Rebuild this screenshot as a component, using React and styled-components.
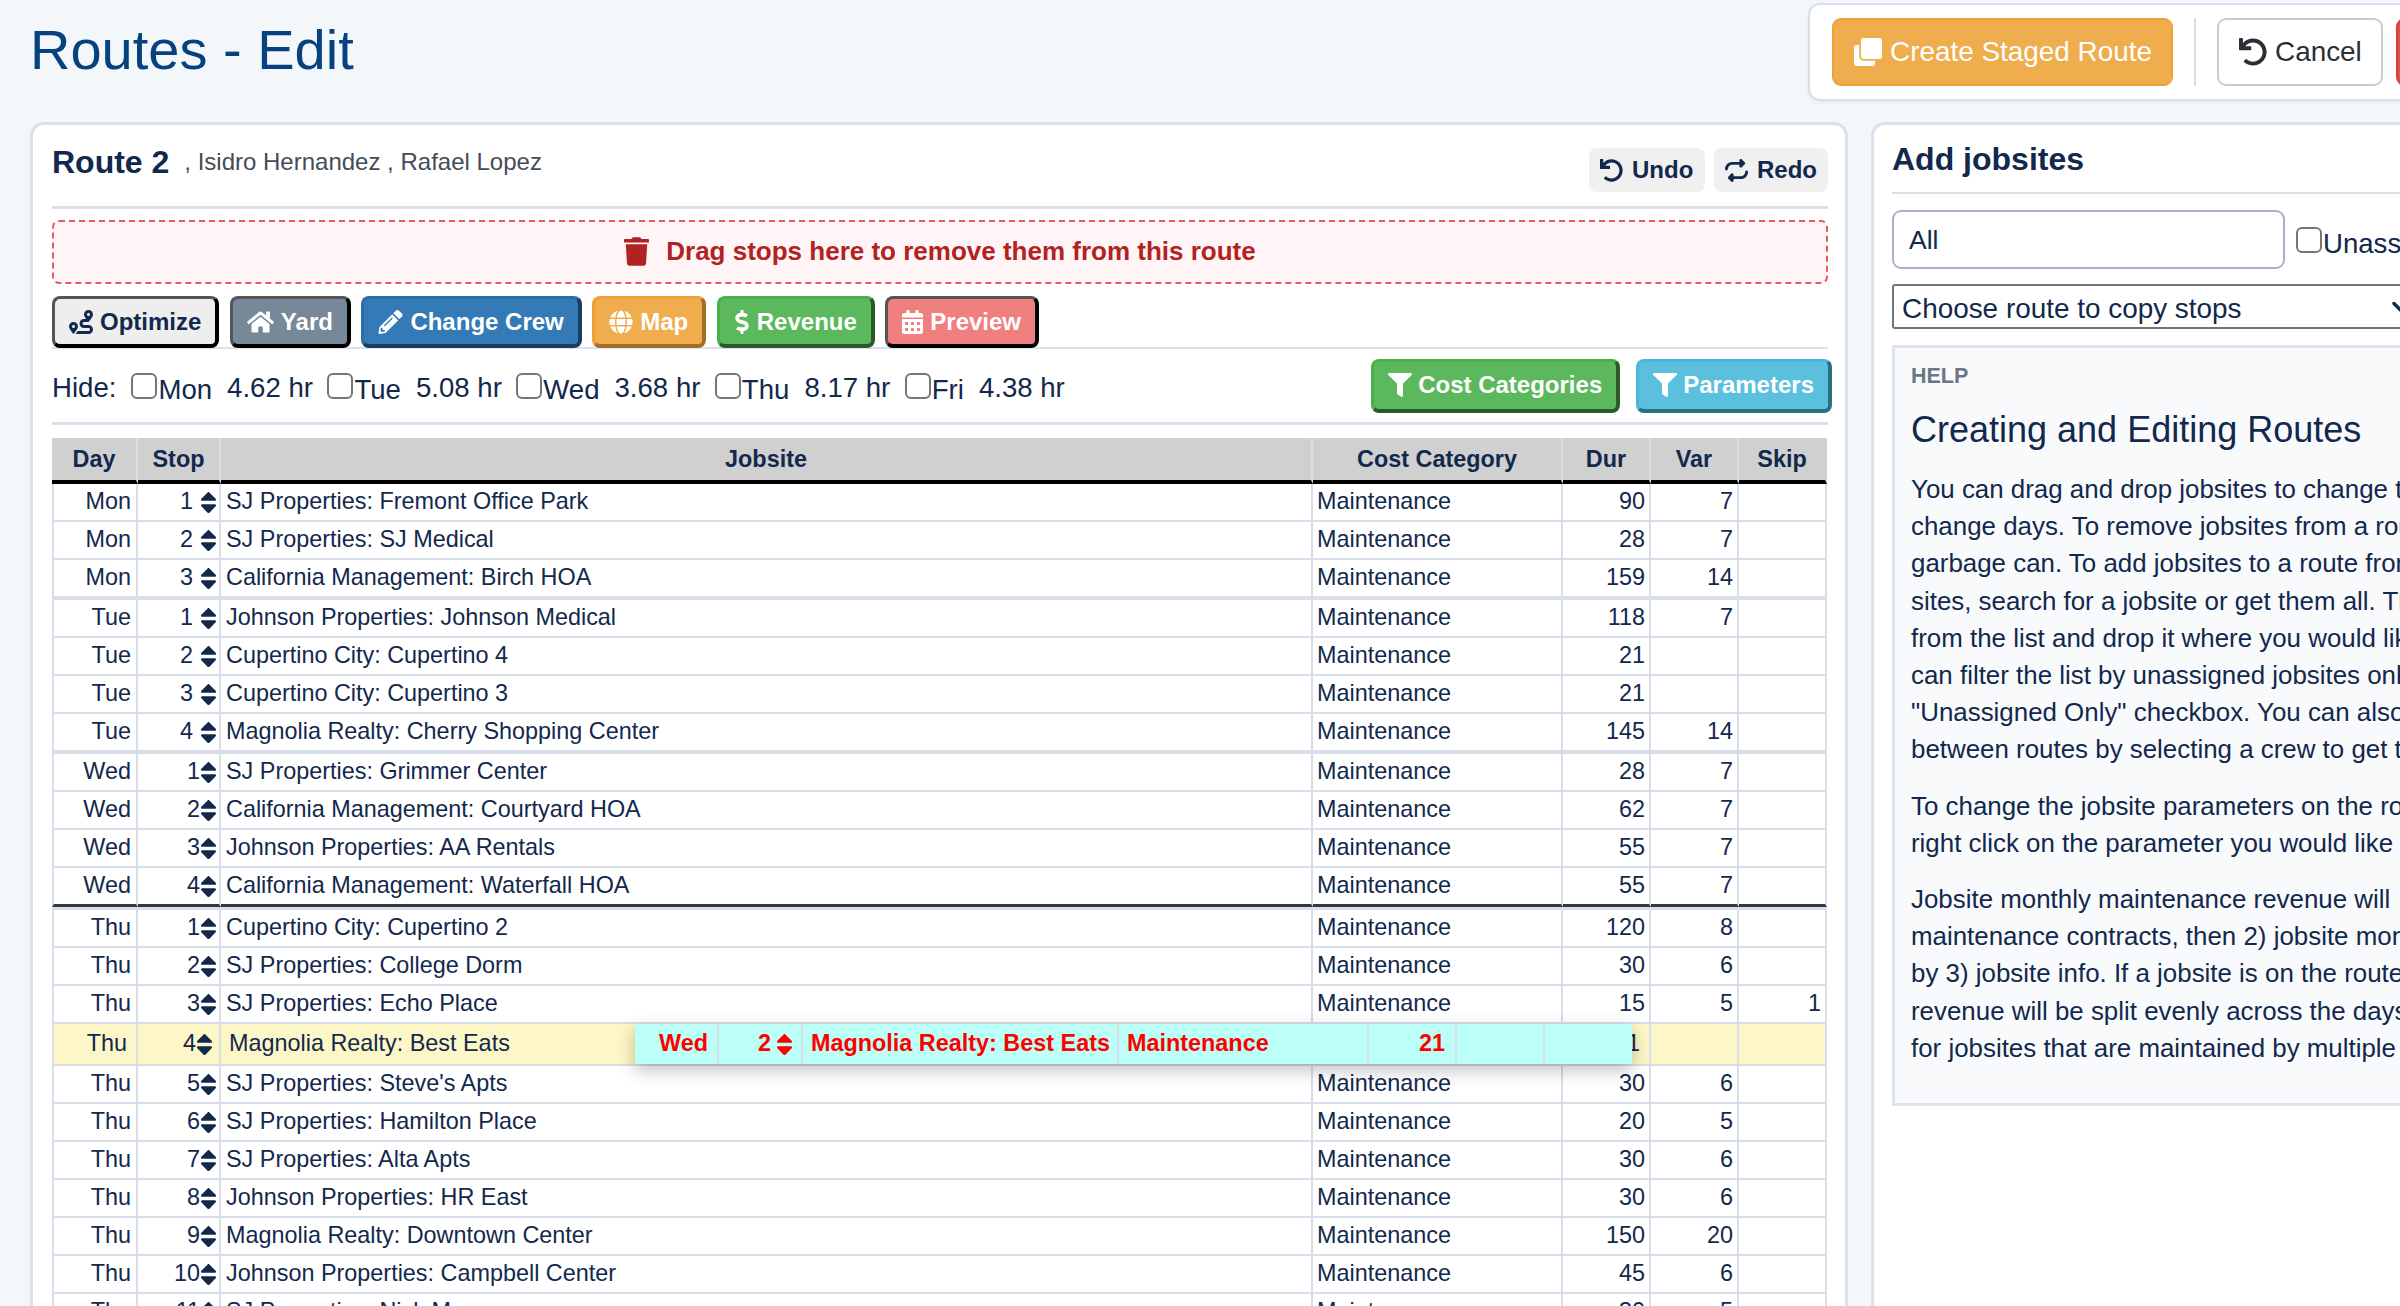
import React from 'react';
import styled, { createGlobalStyle } from 'styled-components';
import { ChevronDown } from 'lucide-react';
import {
  FaClone,
  FaUndo,
  FaTrash,
  FaRoute,
  FaHome,
  FaPencilAlt,
  FaGlobe,
  FaDollarSign,
  FaCalendarAlt,
  FaFilter,
  FaSort,
} from 'react-icons/fa';
import { FaRepeat } from 'react-icons/fa6';

const GlobalStyle = createGlobalStyle`
  html, body {
    margin: 0;
    width: 100vw;
    height: 100vh;
    overflow: hidden;
    background: #f4f7fa;
  }
  body {
    font-family: "Liberation Sans", Arial, sans-serif;
    color: #12284c;
  }
  * {
    box-sizing: border-box;
  }
`;

const Page = styled.div`
  width: 2640px;
  padding-left: 30px;
`;

const TopBar = styled.div`
  display: grid;
  grid-template-columns: 1778px auto;
  height: 122px;
`;

const Title = styled.h1`
  margin: 0;
  padding-top: 20px;
  font-size: 56px;
  line-height: 60px;
  font-weight: 400;
  color: #05427f;
`;

const ActionBox = styled.div`
  display: flex;
  align-items: stretch;
  height: 98px;
  margin-top: 3px;
  padding: 13px 22px;
  background: #fff;
  border: 2px solid #d8dfea;
  border-radius: 12px;
  box-shadow: 0 2px 4px rgba(0, 0, 0, 0.05);
`;

const ActionButton = styled.button`
  display: flex;
  align-items: center;
  gap: 8px;
  flex: none;
  height: 68px;
  width: ${(p) => p.$width}px;
  margin-left: ${(p) => p.$offset || 0}px;
  padding: 0 0 0 ${(p) => p.$pad}px;
  font: 400 27.9px "Liberation Sans", Arial, sans-serif;
  color: ${(p) => p.$color};
  background: ${(p) => p.$bg};
  border: 2px solid ${(p) => p.$border};
  border-radius: 9px;
  svg {
    width: 28px;
    height: 28px;
  }
`;

const VerticalRule = styled.div`
  width: 2px;
  margin: 0 21px;
  background: #d8dfea;
`;

const Columns = styled.div`
  display: grid;
  grid-template-columns: 1818px 760px;
  gap: 23px;
  min-height: 1300px;
`;

const Panel = styled.section`
  background: #fff;
  border: 3px solid #dbe0ec;
  border-radius: 14px;
  padding: ${(p) => p.$top}px 17px 0 ${(p) => p.$left}px;
`;

const RouteHeader = styled.div`
  display: flex;
  align-items: flex-start;
  justify-content: space-between;
  height: 61px;
  border-bottom: 3px solid #dbe0ec;
`;

const RouteName = styled.div`
  display: flex;
  align-items: baseline;
  gap: 15px;
`;

const RouteTitle = styled.h3`
  margin: 0;
  font-size: 32px;
  line-height: 28px;
  font-weight: 700;
  color: #12284c;
`;

const CrewNames = styled.span`
  font-size: 24px;
  color: #444c58;
  position: relative;
  top: -3px;
`;

const HistoryGroup = styled.div`
  display: flex;
  gap: 9px;
`;

const HistoryButton = styled.button`
  display: flex;
  align-items: center;
  gap: 9px;
  height: 44px;
  width: ${(p) => p.$width}px;
  padding: 0 0 0 11px;
  font: 700 24px "Liberation Sans", Arial, sans-serif;
  color: #12284c;
  background: #f0f0f0;
  border: 0;
  border-radius: 8px;
  svg {
    width: 23px;
    height: 23px;
  }
`;

const DropZone = styled.div`
  display: flex;
  align-items: center;
  justify-content: center;
  gap: 17px;
  height: 64px;
  margin-top: 11px;
  padding-bottom: 2px;
  font-size: 26px;
  font-weight: 700;
  color: #b22222;
  background: #fff5f6;
  border: 2.5px dashed #e45b5f;
  border-radius: 7px;
  svg {
    width: 25px;
    height: 29px;
  }
`;

const ToolRow = styled.div`
  display: flex;
  gap: 10.5px;
  margin-top: 12px;
  border-bottom: 2px solid #dbe0ec;
`;

const ToolButton = styled.button`
  display: flex;
  align-items: center;
  gap: 7px;
  height: 52px;
  margin-bottom: -1px;
  padding: 0 14px;
  font: 700 24px "Liberation Sans", Arial, sans-serif;
  color: ${(p) => p.$color || '#fff'};
  background: ${(p) => p.$bg};
  border-style: solid;
  border-width: 3px 4px 4px 3px;
  border-color: ${(p) => p.$light} ${(p) => p.$dark} ${(p) => p.$dark} ${(p) => p.$light};
  border-radius: 8px;
  svg {
    width: ${(p) => p.$icon || 24}px;
    height: 24px;
  }
`;

const HideRow = styled.div`
  display: flex;
  align-items: center;
  height: 76px;
  font-size: 27.6px;
  border-bottom: 3px solid #dbe0ec;
`;

const HideLabel = styled.span`
  margin-right: 15px;
  padding-top: 4px;
`;

const DayToggle = styled.label`
  display: flex;
  align-items: center;
  margin-right: 15px;
`;

const Check = styled.input`
  appearance: none;
  flex: none;
  width: 26px;
  height: 26px;
  margin: 0;
  background: #fff;
  border: 2.5px solid #767676;
  border-radius: 6px;
`;

const DayName = styled.span`
  position: relative;
  top: 4px;
  margin-left: 1px;
`;

const Hours = styled.span`
  margin-right: 14.4px;
  padding-top: 4px;
`;

const FilterGroup = styled.div`
  display: flex;
  gap: 16px;
  margin-left: auto;
  margin-right: -4px;
`;

const FilterButton = styled(ToolButton)`
  height: 54px;
  margin: 0;
  padding: 0 14px;
  gap: 6px;
`;

const RouteTable = styled.table`
  width: 1775px;
  margin-top: 13px;
  table-layout: fixed;
  border-collapse: separate;
  border-spacing: 0;
  font-size: 23.4px;
  background: #fff;
`;

const HeadCell = styled.th`
  height: 46px;
  padding: 0;
  font-size: 23.4px;
  font-weight: 700;
  text-align: center;
  color: #12284c;
  background: #d0d0d0;
  border-bottom: 4px solid #000;
  border-right: 2px solid #d8dfea;
  &:last-child {
    border-right-color: #d0d0d0;
  }
`;

const bottomBorder = {
  normal: '2px solid #d8dfea',
  group: '4px solid #d8dfea',
  week: '3px solid #2f3a46',
};

const Cell = styled.td`
  position: relative;
  height: ${(p) => p.$height}px;
  padding: 0 ${(p) => p.$pad}px;
  line-height: 1;
  white-space: nowrap;
  text-align: ${(p) => p.$align || 'right'};
  background: ${(p) => (p.$active ? '#fdf6c6' : '#fff')};
  border-right: 2px solid #d8dfea;
  border-bottom: ${(p) => bottomBorder[p.$edge]};
  border-top: ${(p) => (p.$afterWeek ? '3px solid #d8dfea' : '0')};
  &:first-child {
    border-left: 2px solid #d8dfea;
  }
`;

const StopValue = styled.div`
  display: flex;
  align-items: center;
  justify-content: flex-end;
  gap: ${(p) => p.$gap}px;
`;

const SortIcon = styled(FaSort)`
  flex: none;
  width: 17px;
  height: 27px;
  margin: -3px 0;
`;

const DragGhost = styled.div`
  position: absolute;
  top: 0;
  left: 414px;
  z-index: 2;
  display: grid;
  grid-template-columns: 84px 84px 316px 250px 88px 88px 87px;
  width: 997px;
  height: 40px;
  font-weight: 700;
  color: #ff0000;
  background: #bbfff6;
  box-shadow: 0 6px 18px rgba(0, 0, 0, 0.25);
`;

const GhostCell = styled.div`
  display: flex;
  align-items: center;
  justify-content: ${(p) => (p.$left ? 'flex-start' : 'flex-end')};
  gap: 5px;
  padding: ${(p) => (p.$left ? '0 0 0 8px' : `0 ${p.$pad || 10}px 0 0`)};
  border-right: 2px solid #d8dfea;
  &:last-child {
    border-right: 0;
  }
`;

const SidePanelTitle = styled.h3`
  margin: 0;
  height: 53px;
  font-size: 32px;
  line-height: 36px;
  font-weight: 700;
  color: #12284c;
  border-bottom: 2.5px solid #dbe0ec;
`;

const SearchRow = styled.div`
  display: flex;
  align-items: center;
  margin-top: 16px;
  font-size: 27.6px;
`;

const SearchInput = styled.input`
  width: 393px;
  height: 59px;
  margin: 0 11px 0 0;
  padding: 2px 15px 0;
  font: 400 26.5px "Liberation Sans", Arial, sans-serif;
  color: #12284c;
  background: #fff;
  border: 2.5px solid #a8b4c6;
  border-radius: 9px;
`;

const SelectWrap = styled.div`
  position: relative;
  margin-top: 15px;
  svg {
    position: absolute;
    top: 9px;
    left: 495px;
    width: 28px;
    height: 28px;
    stroke-width: 3;
    color: #12284c;
    pointer-events: none;
  }
`;

const CopySelect = styled.select`
  appearance: none;
  display: block;
  width: 100%;
  height: 45px;
  padding: 4px 8px 0;
  font: 400 27.9px "Liberation Sans", Arial, sans-serif;
  color: #12284c;
  background: #fff;
  border: 2.5px solid #767676;
  border-radius: 3px;
`;

const HelpBox = styled.div`
  height: 761px;
  margin-top: 16px;
  padding: 16px 16px 0;
  background: #f8fafc;
  border: 3px solid #dde3ec;
`;

const HelpLabel = styled.div`
  font-size: 21.5px;
  line-height: 24px;
  font-weight: 700;
  color: #6b7788;
`;

const HelpTitle = styled.h2`
  margin: 20px 0 19px;
  font-size: 36px;
  line-height: 44px;
  font-weight: 400;
  color: #12284c;
`;

const HelpText = styled.p`
  margin: 0 0 19px;
  font-size: 25.9px;
  line-height: 37.2px;
  white-space: nowrap;
`;

const days = [
  { label: 'Mon', hours: '4.62 hr' },
  { label: 'Tue', hours: '5.08 hr' },
  { label: 'Wed', hours: '3.68 hr' },
  { label: 'Thu', hours: '8.17 hr' },
  { label: 'Fri', hours: '4.38 hr' },
];

const columns = [
  { name: 'Day', width: 86 },
  { name: 'Stop', width: 83 },
  { name: 'Jobsite', width: 1092 },
  { name: 'Cost Category', width: 250 },
  { name: 'Dur', width: 88 },
  { name: 'Var', width: 88 },
  { name: 'Skip', width: 88 },
];

const stops = [
  ['Mon', 1, 'SJ Properties: Fremont Office Park', 90, 7, ''],
  ['Mon', 2, 'SJ Properties: SJ Medical', 28, 7, ''],
  ['Mon', 3, 'California Management: Birch HOA', 159, 14, ''],
  ['Tue', 1, 'Johnson Properties: Johnson Medical', 118, 7, ''],
  ['Tue', 2, 'Cupertino City: Cupertino 4', 21, '', ''],
  ['Tue', 3, 'Cupertino City: Cupertino 3', 21, '', ''],
  ['Tue', 4, 'Magnolia Realty: Cherry Shopping Center', 145, 14, ''],
  ['Wed', 1, 'SJ Properties: Grimmer Center', 28, 7, ''],
  ['Wed', 2, 'California Management: Courtyard HOA', 62, 7, ''],
  ['Wed', 3, 'Johnson Properties: AA Rentals', 55, 7, ''],
  ['Wed', 4, 'California Management: Waterfall HOA', 55, 7, ''],
  ['Thu', 1, 'Cupertino City: Cupertino 2', 120, 8, ''],
  ['Thu', 2, 'SJ Properties: College Dorm', 30, 6, ''],
  ['Thu', 3, 'SJ Properties: Echo Place', 15, 5, 1],
  ['Thu', 4, 'Magnolia Realty: Best Eats', 21, '', ''],
  ['Thu', 5, "SJ Properties: Steve's Apts", 30, 6, ''],
  ['Thu', 6, 'SJ Properties: Hamilton Place', 20, 5, ''],
  ['Thu', 7, 'SJ Properties: Alta Apts', 30, 6, ''],
  ['Thu', 8, 'Johnson Properties: HR East', 30, 6, ''],
  ['Thu', 9, 'Magnolia Realty: Downtown Center', 150, 20, ''],
  ['Thu', 10, 'Johnson Properties: Campbell Center', 45, 6, ''],
  ['Thu', 11, 'SJ Properties: Nick M', 30, 5, ''],
];

const helpParagraphs = [
  [
    'You can drag and drop jobsites to change the',
    'change days. To remove jobsites from a route',
    'garbage can. To add jobsites to a route from',
    'sites, search for a jobsite or get them all. Then',
    'from the list and drop it where you would like',
    'can filter the list by unassigned jobsites only',
    '"Unassigned Only" checkbox. You can also',
    'between routes by selecting a crew to get the',
  ],
  [
    'To change the jobsite parameters on the route',
    'right click on the parameter you would like',
  ],
  [
    'Jobsite monthly maintenance revenue will',
    'maintenance contracts, then 2) jobsite monthly',
    'by 3) jobsite info. If a jobsite is on the route',
    'revenue will be split evenly across the days',
    'for jobsites that are maintained by multiple',
  ],
];

const StopRow = ({ stop, next }) => {
  const [day, number, jobsite, dur, variance, skip] = stop;
  const active = day === 'Thu' && number === 4;
  const afterWeek = day === 'Thu' && number === 1;
  const endsWeek = day === 'Wed' && number === 4;
  const endsGroup = next && next[0] !== day;
  const edge = endsWeek ? 'week' : endsGroup ? 'group' : 'normal';

  let height = 38;
  if (edge === 'group') height = 40;
  if (endsWeek) height = 39;
  if (afterWeek) height = 41;
  if (active) height = 42;

  const pad = active ? 9 : 5;
  const shared = { $height: height, $edge: edge, $afterWeek: afterWeek, $active: active };

  return (
    <tr>
      <Cell {...shared} $pad={pad}>{day}</Cell>
      <Cell {...shared} $pad={active ? 6 : 2}>
        <StopValue $gap={day === 'Mon' || day === 'Tue' ? 7 : 0}>
          {number}
          <SortIcon />
        </StopValue>
      </Cell>
      <Cell {...shared} $pad={active ? 8 : 5} $align="left">
        {jobsite}
        {active && (
          <DragGhost>
            <GhostCell $pad={9}>Wed</GhostCell>
            <GhostCell $pad={8}>2<SortIcon /></GhostCell>
            <GhostCell $left>Magnolia Realty: Best Eats</GhostCell>
            <GhostCell $left>Maintenance</GhostCell>
            <GhostCell>21</GhostCell>
            <GhostCell />
            <GhostCell />
          </DragGhost>
        )}
      </Cell>
      <Cell {...shared} $pad={4} $align="left">Maintenance</Cell>
      <Cell {...shared} $pad={active ? 9 : 4}>{dur}</Cell>
      <Cell {...shared} $pad={4}>{variance}</Cell>
      <Cell {...shared} $pad={4}>{skip}</Cell>
    </tr>
  );
};

export default function App() {
  return (
    <Page>
      <GlobalStyle />
      <TopBar>
        <Title>Routes - Edit</Title>
        <ActionBox>
          <ActionButton $width={341} $pad={20} $bg="#f0ad4e" $border="#eea236" $color="#fff">
            <FaClone />
            Create Staged Route
          </ActionButton>
          <VerticalRule />
          <ActionButton $width={166} $pad={20} $bg="#fff" $border="#ccc" $color="#2b2f36">
            <FaUndo />
            Cancel
          </ActionButton>
          <ActionButton $width={120} $pad={0} $offset={13} $bg="#d9534f" $border="#d43f3a" $color="#fff" />
        </ActionBox>
      </TopBar>

      <Columns>
        <Panel $top={23} $left={19}>
          <RouteHeader>
            <RouteName>
              <RouteTitle>Route 2</RouteTitle>
              <CrewNames>, Isidro Hernandez , Rafael Lopez</CrewNames>
            </RouteName>
            <HistoryGroup>
              <HistoryButton $width={116}><FaUndo />Undo</HistoryButton>
              <HistoryButton $width={114}><FaRepeat />Redo</HistoryButton>
            </HistoryGroup>
          </RouteHeader>

          <DropZone>
            <FaTrash />
            Drag stops here to remove them from this route
          </DropZone>

          <ToolRow>
            <ToolButton $bg="#eeeeee" $color="#12284c" $light="#555" $dark="#000"><FaRoute />Optimize</ToolButton>
            <ToolButton $icon={27} $bg="#778899" $light="#555" $dark="#000"><FaHome />Yard</ToolButton>
            <ToolButton $icon={25} $bg="#337ab7" $light="#2e6da4" $dark="#1a3d5c"><FaPencilAlt />Change Crew</ToolButton>
            <ToolButton $bg="#f0ad4e" $light="#eea236" $dark="#a06f2a"><FaGlobe />Map</ToolButton>
            <ToolButton $icon={16} $bg="#5cb85c" $light="#4cae4c" $dark="#2a5a2a"><FaDollarSign />Revenue</ToolButton>
            <ToolButton $icon={21} $bg="#f08080" $light="#555" $dark="#000"><FaCalendarAlt />Preview</ToolButton>
          </ToolRow>

          <HideRow>
            <HideLabel>Hide:</HideLabel>
            {days.map((day) => (
              <React.Fragment key={day.label}>
                <DayToggle>
                  <Check type="checkbox" />
                  <DayName>{day.label}</DayName>
                </DayToggle>
                <Hours>{day.hours}</Hours>
              </React.Fragment>
            ))}
            <FilterGroup>
              <FilterButton $bg="#5cb85c" $light="#4cae4c" $dark="#2a5a2a"><FaFilter />Cost Categories</FilterButton>
              <FilterButton $bg="#5bc0de" $light="#46b8da" $dark="#2a7085"><FaFilter />Parameters</FilterButton>
            </FilterGroup>
          </HideRow>

          <RouteTable>
            <colgroup>
              {columns.map((col) => (
                <col key={col.name} width={col.width} />
              ))}
            </colgroup>
            <thead>
              <tr>
                {columns.map((col) => (
                  <HeadCell key={col.name}>{col.name}</HeadCell>
                ))}
              </tr>
            </thead>
            <tbody>
              {stops.map((stop, i) => (
                <StopRow key={`${stop[0]}-${stop[1]}`} stop={stop} next={stops[i + 1]} />
              ))}
            </tbody>
          </RouteTable>
        </Panel>

        <Panel $top={16} $left={18}>
          <SidePanelTitle>Add jobsites</SidePanelTitle>
          <SearchRow>
            <SearchInput defaultValue="All" />
            <Check type="checkbox" />
            <DayName>Unassigned Only</DayName>
          </SearchRow>
          <SelectWrap>
            <CopySelect defaultValue="">
              <option value="">Choose route to copy stops</option>
            </CopySelect>
            <ChevronDown />
          </SelectWrap>
          <HelpBox>
            <HelpLabel>HELP</HelpLabel>
            <HelpTitle>Creating and Editing Routes</HelpTitle>
            {helpParagraphs.map((lines) => (
              <HelpText key={lines[0]}>
                {lines.map((line) => (
                  <React.Fragment key={line}>
                    {line}
                    <br />
                  </React.Fragment>
                ))}
              </HelpText>
            ))}
          </HelpBox>
        </Panel>
      </Columns>
    </Page>
  );
}
